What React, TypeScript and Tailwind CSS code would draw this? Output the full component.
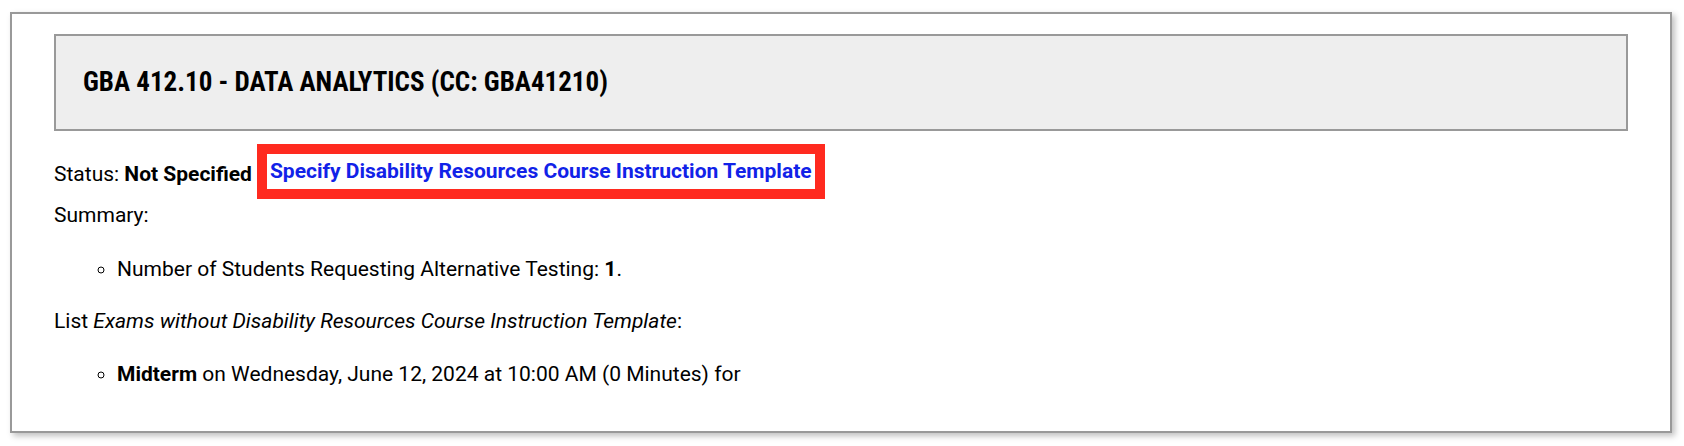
export default function App() {
  return (
    <div className="w-[1684px] h-[446px] bg-white pt-[12px] pl-[10px] font-['Roboto',sans-serif] text-black">
      <div className="w-[1662px] h-[421px] border-2 border-[#999999] bg-white px-[42px] pt-[20px] shadow-[3px_3px_6px_rgba(0,0,0,0.25)]">
        {/* course header */}
        <div className="flex h-[97px] items-center border-2 border-[#999999] bg-[#eeeeee] pl-[27px]">
          <h1 className="text-[27px] font-bold font-stretch-condensed">
            GBA 412.10 - DATA ANALYTICS (CC: GBA41210)
          </h1>
        </div>

        <div className="mt-[13px] flex items-center text-[21px] leading-[25px]">
          <span className="pt-[6px]">
            Status: <b>Not Specified</b>
          </span>
          <div className="ml-[5px] border-[10px] border-[#ff2a1f] bg-white px-[3px] py-[5px]">
            <a href="#" className="font-bold text-[#1122e8]">
              Specify Disability Resources Course Instruction Template
            </a>
          </div>
        </div>

        <p className="mt-[4px] text-[21px] leading-[25px]">Summary:</p>
        <ul className="mt-[29px] list-[circle] pl-[63px] text-[21px] leading-[25px]">
          <li>
            Number of Students Requesting Alternative Testing: <b>1</b>.
          </li>
        </ul>

        <p className="mt-[27px] text-[21px] leading-[25px]">
          List <i>Exams without Disability Resources Course Instruction Template</i>:
        </p>
        <ul className="mt-[28px] list-[circle] pl-[63px] text-[21px] leading-[25px]">
          <li>
            <b>Midterm</b> on Wednesday, June 12, 2024 at 10:00 AM (0 Minutes) for
          </li>
        </ul>
      </div>
    </div>
  );
}
